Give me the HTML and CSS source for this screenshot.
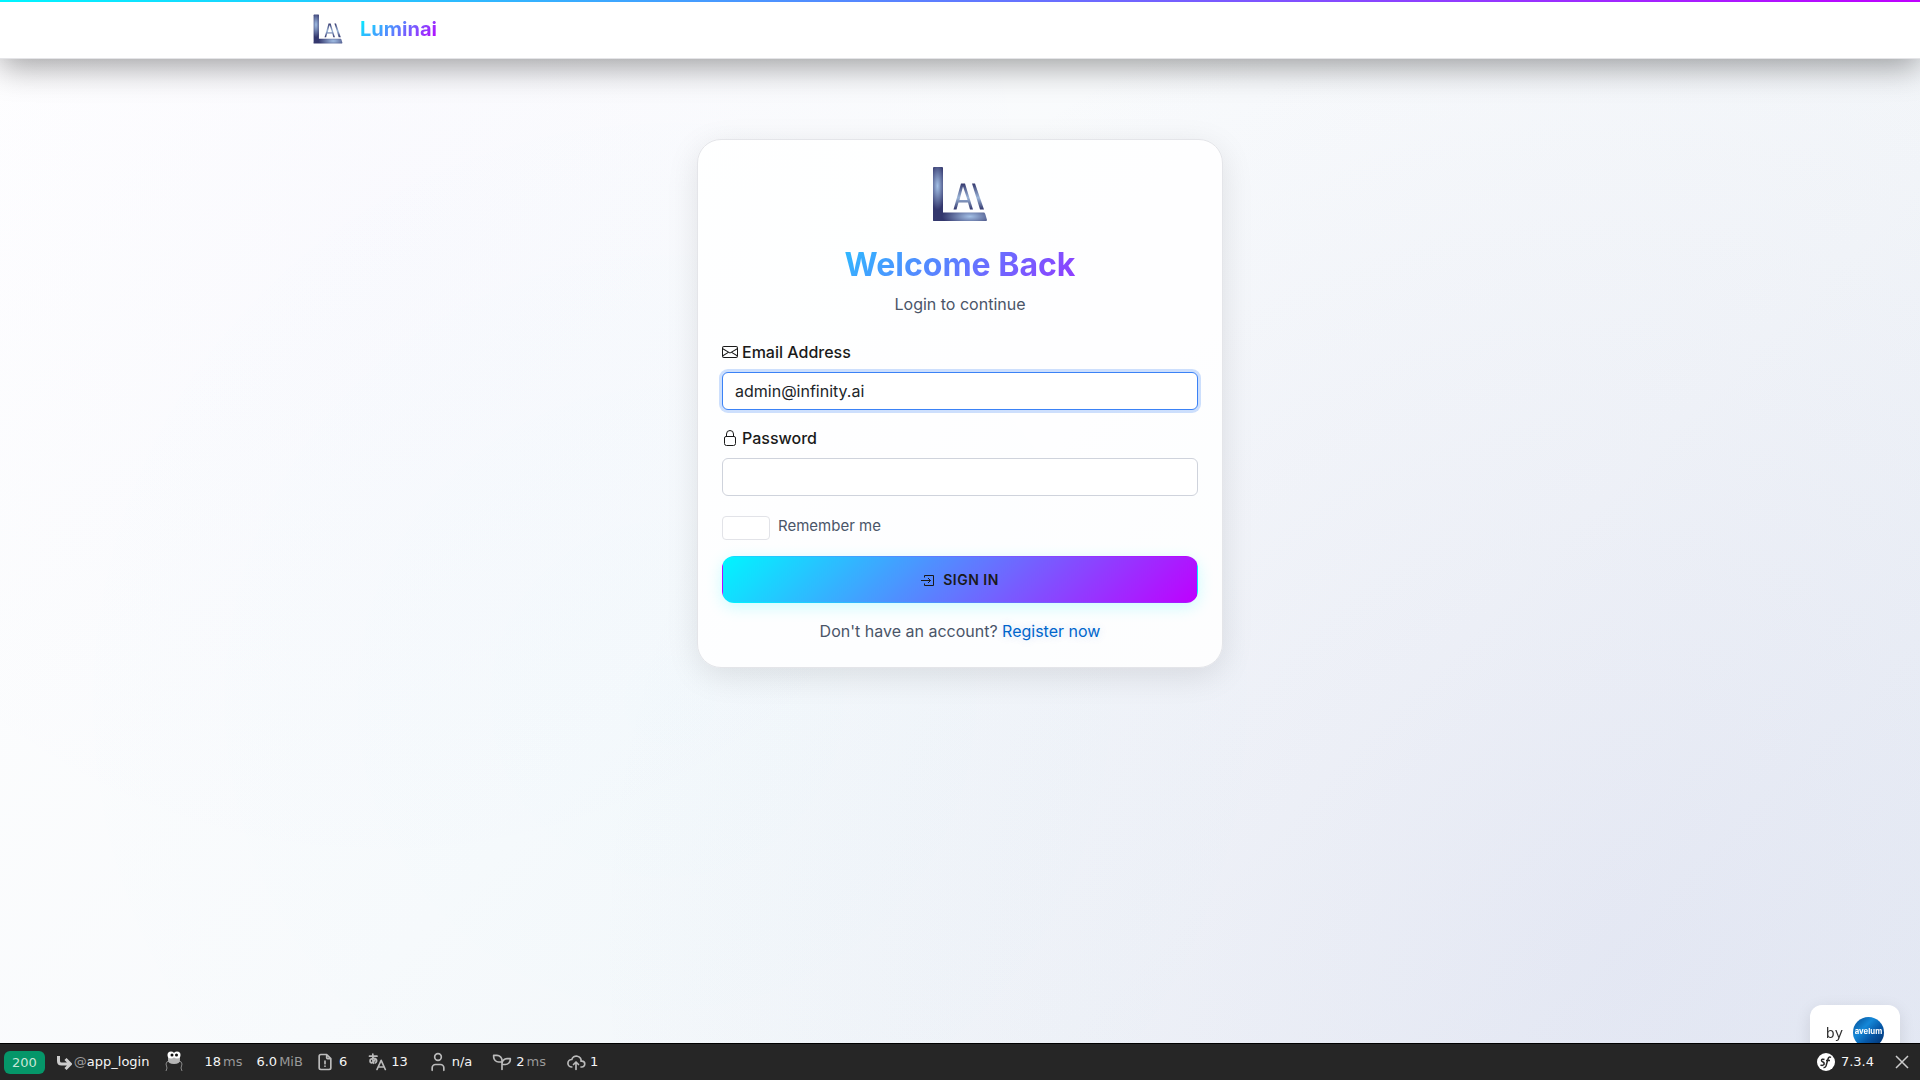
FILE: index.html
```html
<!DOCTYPE html>
<html lang="en">
<head>
<meta charset="utf-8">
<meta name="viewport" content="width=device-width, initial-scale=1">
<title>Login - Luminai</title>
<link rel="stylesheet" href="styles.css">
</head>
<body>
<svg class="defs" width="0" height="0" aria-hidden="true">
  <defs>
    <radialGradient id="stem" gradientUnits="userSpaceOnUse" cx="0" cy="0" r="1" gradientTransform="translate(7.500 22) scale(8 24)">
      <stop offset="0" stop-color="#a3c0e6"/><stop offset="1" stop-color="#33376d"/>
    </radialGradient>
    <radialGradient id="foot" gradientUnits="userSpaceOnUse" cx="0" cy="0" r="1" gradientTransform="translate(40 52.500) scale(28 10)">
      <stop offset="0" stop-color="#a3c0e6"/><stop offset="1" stop-color="#33376d"/>
    </radialGradient>
    <linearGradient id="letters" x1="0" y1="0" x2="0" y2="1">
      <stop offset="0" stop-color="#33376d"/><stop offset=".55" stop-color="#9bb5d8"/><stop offset="1" stop-color="#33376d"/>
    </linearGradient>
    <symbol id="logo" viewBox="0 0 60 60">
      <path d="M4 3h8q1 0 1 1v45l-10 8V4q0-1 1-1z" fill="url(#stem)"/>
      <path d="M12 48.500h42q1 0 2 4l1 3.500q0 1-1 1H4q-1 0-1-1z" fill="url(#foot)"/>
      <path d="M23.500 45.500l7.500-26h4l8 26h-3l-2-7h-9.500l-2 7zm6-9.500h8l-4.500-13.500zM42 19.500h3l9 26h-4z" fill="url(#letters)"/>
    </symbol>
  </defs>
</svg>

<header class="navbar">
  <div class="container">
    <a class="brand" href="#">
      <svg class="brand-logo" viewBox="0 0 60 60" aria-hidden="true"><use href="#logo"/></svg>
      <span class="brand-name">Luminai</span>
    </a>
  </div>
</header>

<main class="page">
  <section class="card">
    <svg class="card-logo" viewBox="0 0 60 60" aria-hidden="true"><use href="#logo"/></svg>
    <h1 class="title">Welcome Back</h1>
    <p class="subtitle">Login to continue</p>
    <form class="form">
      <div class="field">
        <label class="label" for="email">
          <svg class="icon" viewBox="0 0 16 16" fill="currentColor" aria-hidden="true"><path d="M0 4a2 2 0 0 1 2-2h12a2 2 0 0 1 2 2v8a2 2 0 0 1-2 2H2a2 2 0 0 1-2-2V4Zm2-1a1 1 0 0 0-1 1v.217l7 4.2 7-4.2V4a1 1 0 0 0-1-1H2Zm13 2.383-4.708 2.825L15 11.105V5.383Zm-.034 6.876-5.64-3.471L8 9.583l-1.326-.795-5.64 3.47A1 1 0 0 0 2 13h12a1 1 0 0 0 .966-.741ZM1 11.105l4.708-2.897L1 5.383v5.722Z"/></svg>
          Email Address
        </label>
        <input class="input input-active" id="email" type="email" value="admin@infinity.ai">
      </div>
      <div class="field">
        <label class="label" for="password">
          <svg class="icon" viewBox="0 0 16 16" fill="none" stroke="currentColor" aria-hidden="true"><path d="M4.500 6.500V4a3.500 3.500 0 0 1 7 0v2.500M4 6.500h8a1.500 1.500 0 0 1 1.500 1.500v5.500a2 2 0 0 1-2 2h-7a2 2 0 0 1-2-2V8A1.500 1.500 0 0 1 4 6.500z"/></svg>
          Password
        </label>
        <input class="input" id="password" type="password">
      </div>
      <div class="remember">
        <input class="check" id="remember" type="checkbox">
        <label class="check-label" for="remember">Remember me</label>
      </div>
      <button class="submit" type="submit">
        <svg class="submit-icon" viewBox="0 0 14 14" fill="none" stroke="currentColor" aria-hidden="true"><path d="M3.500 4.500v-2h9v10h-9v-2M0 7.500h9.500M7 5l2.500 2.500L7 10"/></svg>
        Sign In
      </button>
    </form>
    <p class="register">Don't have an account? <a class="link" href="#">Register now</a></p>
  </section>
</main>

<aside class="credit">
  <span>by</span>
  <svg class="credit-logo" viewBox="0 0 32 32" role="img" aria-label="avelum">
    <defs><linearGradient id="disc" x1="0" y1="0" x2="1" y2="1"><stop offset="0" stop-color="#04488f"/><stop offset=".35" stop-color="#1488d8"/><stop offset=".6" stop-color="#0658a8"/><stop offset="1" stop-color="#022b66"/></linearGradient></defs>
    <circle cx="16" cy="16" r="16" fill="url(#disc)"/>
    <text class="credit-text" x="16" y="18" text-anchor="middle">avelum</text>
  </svg>
</aside>

<footer class="toolbar">
  <a class="status" href="#">200</a>
  <a class="tool tool-route" href="#">
    <svg class="tool-arrow" viewBox="0 0 16 16" fill="none" stroke="#ccc" stroke-width="3" aria-hidden="true"><path d="M2.500 2v5q0 3 3 3H13M9.500 5l5 5-5 5"/></svg>
    <span><span class="unit">@</span>app_login</span>
  </a>
  <a class="tool tool-face" href="#" aria-label="Debug">
    <svg width="20" height="22" viewBox="0 0 20 22" aria-hidden="true"><path d="M6 10q-4 0-4 3l1 4-1 3M14 10q4 0 4 3l-1 4 1 3" fill="none" stroke="#888"/><path d="M4 4h12v5q0 4-6 4T4 9z" fill="#b5b5b5"/><circle cx="7" cy="4" r="3.500" fill="#fff"/><circle cx="13" cy="4" r="3.500" fill="#fff"/><circle cx="8" cy="4" r="1.500" fill="#111"/><circle cx="12.500" cy="4" r="1.500" fill="#111"/></svg>
  </a>
  <a class="tool tool-text" href="#">18<span class="unit">ms</span></a>
  <a class="tool tool-text tool-memory" href="#">6.0<span class="unit">MiB</span></a>
  <a class="tool" href="#">
    <svg class="tool-icon" viewBox="0 0 24 24" aria-hidden="true"><path d="M14 3v4a1 1 0 0 0 1 1h4M17 21H7a2 2 0 0 1-2-2V5a2 2 0 0 1 2-2h7l5 5v11a2 2 0 0 1-2 2zM12 17v.01M12 11v3"/></svg>6
  </a>
  <a class="tool" href="#">
    <svg class="tool-icon" viewBox="0 0 24 24" aria-hidden="true"><path d="M3 5h9M7 2.500v7q0 3 1 4M10 8q-2 5-5 5-2-1-1-4 4-2.500 7-.5 1.500 2.500-1 4.500M12 21l5-11 5 11M14 18h6"/></svg>13
  </a>
  <a class="tool" href="#">
    <svg class="tool-icon" viewBox="0 0 24 24" aria-hidden="true"><path d="M8 6a4 4 0 1 0 8 0 4 4 0 0 0-8 0M5 22v-3a4 4 0 0 1 4-4h6a4 4 0 0 1 4 4v3"/></svg>n/a
  </a>
  <a class="tool" href="#">
    <svg class="tool-icon" viewBox="0 0 24 24" aria-hidden="true"><path d="M12 10A6 6 0 0 0 6 4H2v2a6 6 0 0 0 6 6h4M12 14a6 6 0 0 1 6-6h4v1a6 6 0 0 1-6 6h-4M12 21V10"/></svg>
    <span class="measure">2<span class="unit">ms</span></span>
  </a>
  <a class="tool" href="#">
    <svg class="tool-icon" viewBox="0 0 24 24" aria-hidden="true"><path d="M7 18a4.600 4.400 0 0 1 0-9 5 4.500 0 0 1 11 2h1a3.500 3.500 0 0 1 0 7h-1M9 15l3-3 3 3M12 12v9"/></svg>1
  </a>
  <div class="toolbar-end">
    <a class="version" href="#">
      <svg width="20" height="20" viewBox="0 0 20 20" aria-hidden="true"><circle cx="10" cy="10" r="9" fill="#fff"/><path d="M8.500 7.500q-3-1-3 1 0 1 1.500 1.500t1 2.500q-1.500 1.500-3.500.5M15 5.500q-2-1.500-3 1.500l-2 7q-1 2-2.500 1.500M10 8.500h4" fill="none" stroke="#262626" stroke-width="1.500"/></svg>7.3.4
    </a>
    <button class="close" type="button" aria-label="Close toolbar">
      <svg width="14" height="14" viewBox="0 0 14 14" fill="none" stroke="#ccc" stroke-width="1.500" aria-hidden="true"><path d="M1 1l12 12M13 1L1 13"/></svg>
    </button>
  </div>
</footer>
</body>
</html>
```
FILE: styles.css
```css
*, *::before, *::after { box-sizing: border-box; }

body {
  margin: 0;
  min-height: 100vh;
  font: 16px/24px Inter, "Noto Sans", sans-serif;
  color: #1a1a1a;
  background:
    radial-gradient(circle at 20% 20%, rgba(120, 80, 255, 0.02), transparent 40%),
    radial-gradient(circle at 35% 65%, rgba(0, 200, 255, 0.02), transparent 45%),
    radial-gradient(circle at 84% 88%, rgba(110, 110, 200, 0.08), transparent 55%),
    linear-gradient(135deg, #ffffff 0%, #f8fafc 45%, #f3f6f9 70%, #e9eef5 100%);
}

a { color: inherit; text-decoration: none; }
svg { display: block; flex: none; }
.defs { position: absolute; }

.navbar {
  position: relative;
  height: 59px;
  background: #fff;
  border-bottom: 1px solid #e4e4e7;
  box-shadow: 0 8px 32px rgba(0, 0, 0, 0.37);
}

.navbar::before {
  content: "";
  position: absolute;
  inset: 0 0 auto;
  height: 2px;
  background: linear-gradient(90deg, #00f5ff, #bf00ff);
}

.container {
  display: flex;
  align-items: center;
  max-width: 1296px;
  height: 100%;
  margin: 0 auto;
}

.brand { display: flex; align-items: center; gap: 16px; }
.brand-logo { width: 32px; height: 32px; }

.brand-name,
.title {
  font-weight: 700;
  background: linear-gradient(135deg, #00f5ff, #bf00ff);
  background-clip: text;
  -webkit-background-clip: text;
  color: transparent;
}

.brand-name { font-size: 20px; }

.page { padding: 80px 24px; }

.card {
  display: flex;
  flex-direction: column;
  max-width: 526px;
  margin: 0 auto;
  padding: 24px;
  background: rgba(255, 255, 255, 0.85);
  border: 1px solid #e4e5e9;
  border-radius: 24px;
  box-shadow: 0 8px 32px rgba(0, 0, 0, 0.1);
}

.card-logo { width: 60px; height: 60px; margin: 0 auto 22px; }
.title { margin: 0 0 8px; font-size: 32px; line-height: 38px; text-align: center; }
.subtitle { margin: 0 0 24px; text-align: center; color: #4a5568; }
.form { display: flex; flex-direction: column; gap: 16px; }
.field { display: flex; flex-direction: column; gap: 8px; }
.label { display: flex; align-items: center; gap: 4px; font-weight: 500; }
.icon { width: 16px; height: 16px; }

.input {
  width: 100%;
  height: 38px;
  padding: 6px 12px;
  font: inherit;
  color: #212529;
  background: #fff;
  border: 1px solid #cfd3dc;
  border-radius: 6px;
  outline: 0;
}

.input-active {
  border-color: #3b82f6;
  box-shadow: 0 0 0 3px rgba(59, 130, 246, 0.25);
}

.remember { display: flex; gap: 8px; margin-top: 4px; }

.check {
  appearance: none;
  width: 48px;
  height: 24px;
  margin: 0;
  background: #fff;
  border: 1px solid #e2e3e8;
  border-radius: 4px;
}

.check-label { font-size: 15px; line-height: 20px; color: #4a5568; }

.submit {
  display: flex;
  align-items: center;
  justify-content: center;
  gap: 8px;
  height: 47px;
  font: 600 14px/20px Inter, "Noto Sans", sans-serif;
  letter-spacing: 0.5px;
  text-transform: uppercase;
  color: #1a1a1a;
  background: linear-gradient(135deg, #00f5ff, #bf00ff);
  border: 1px solid transparent;
  border-radius: 12px;
  box-shadow: 0 4px 16px rgba(0, 245, 255, 0.2);
}

.submit-icon { width: 14px; height: 14px; }
.register { margin: 16px 0 0; text-align: center; color: #4a5568; }
.link { color: #0066cc; text-shadow: 0 0 10px rgba(0, 102, 204, 0.2); }

.credit {
  position: fixed;
  right: 20px;
  bottom: 20px;
  display: flex;
  align-items: center;
  gap: 10px;
  height: 55px;
  padding: 0 16px;
  font: 14px/20px "DejaVu Sans", sans-serif;
  color: #333;
  background: #fff;
  border-radius: 12px;
  box-shadow: 0 4px 16px rgba(0, 0, 0, 0.1);
}

.credit-logo { width: 31px; height: 31px; }
.credit-text { font: 700 8px Inter, sans-serif; fill: #fff; }

.toolbar {
  position: fixed;
  inset: auto 0 0;
  display: flex;
  align-items: center;
  height: 37px;
  font: 13px/36px "DejaVu Sans", sans-serif;
  color: #f5f5f5;
  background: #262626;
  border-top: 1px solid #000;
}

.status {
  margin-left: 4px;
  padding: 0 8px;
  line-height: 23px;
  color: #c8e6d8;
  background: #059669;
  border-radius: 6px;
}

.tool { display: flex; align-items: center; gap: 4px; padding: 0 10px; white-space: nowrap; }
.tool-route { gap: 2px; padding-left: 11px; }
.tool-face { padding: 0 13px 0 5px; }
.tool-text { gap: 2px; padding: 0 7px; }
.tool-memory { padding-right: 2px; }
.measure { display: flex; gap: 2px; }
.tool-arrow { width: 16px; height: 16px; }
.unit { color: #999; }
.tool-icon { width: 20px; height: 20px; fill: none; stroke: #bbb; stroke-width: 2; stroke-linecap: round; stroke-linejoin: round; }
.toolbar-end { display: flex; align-items: center; margin-left: auto; }
.version { display: flex; align-items: center; gap: 5px; }
.close { display: flex; margin: 0 11px 0 21px; padding: 0; background: none; border: 0; }
```
